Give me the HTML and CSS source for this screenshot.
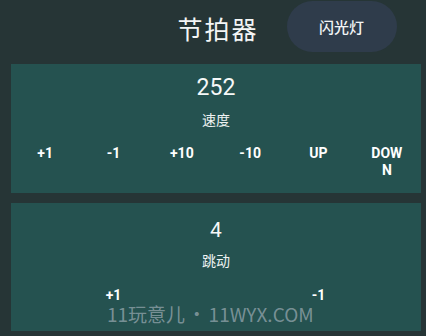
FILE: index.html
```html
<!DOCTYPE html>
<html lang="zh">
<head>
<meta charset="utf-8">
<link rel="stylesheet" href="styles.css">
</head>
<body>
<div class="screen">
  <header class="topbar">
    <div class="spacer"></div>
    <h1 class="title">节拍器</h1>
    <div class="actions"><button class="pill">闪光灯</button></div>
  </header>
  <section class="card card-speed">
    <div class="value value-speed">252</div>
    <div class="label">速度</div>
    <div class="btns six">
      <button class="btn"><span>+1</span></button>
      <button class="btn"><span>-1</span></button>
      <button class="btn"><span>+10</span></button>
      <button class="btn"><span>-10</span></button>
      <button class="btn"><span>UP</span></button>
      <button class="btn"><span>DOWN</span></button>
    </div>
  </section>
  <section class="card card-beat">
    <div class="value value-beat">4</div>
    <div class="label label-beat">跳动</div>
    <div class="btns two">
      <button class="btn"><span>+1</span></button>
      <button class="btn"><span>-1</span></button>
    </div>
  </section>
  <div class="watermark">11玩意儿 • 11WYX.COM</div>
</div>
</body>
</html>
```
FILE: styles.css
```css
* { box-sizing: border-box; }
html, body {
  margin: 0;
  padding: 0;
  background: #263536;
}
body {
  font-family: Roboto, "Noto Sans CJK SC", sans-serif;
  color: #ffffff;
  width: 426px;
  height: 336px;
  overflow: hidden;
}
.screen {
  position: relative;
  width: 426px;
  height: 336px;
  padding: 1px 5px 0 11px;
}
.topbar {
  display: grid;
  grid-template-columns: 1fr auto 1fr;
  align-items: center;
  height: 51px;
  margin-bottom: 12px;
  padding-left: 4px;
}
.title {
  margin: 0;
  font-family: "Noto Sans CJK SC", sans-serif;
  font-weight: 400;
  font-size: 25px;
  line-height: 30px;
  letter-spacing: 2px;
  color: #f4f6f6;
  margin-top: 2px;
}
.actions {
  display: flex;
  justify-content: flex-start;
  padding-left: 28px;
}
.pill {
  width: 110px;
  height: 51px;
  border: none;
  border-radius: 26px;
  background: #2f3c4b;
  color: #f2f4f6;
  font-family: "Noto Sans CJK SC", sans-serif;
  font-weight: 500;
  font-size: 15px;
  padding: 0;
}
.card {
  background: #255250;
  display: flex;
  flex-direction: column;
  align-items: center;
}
.card-speed {
  height: 129px;
  padding-top: 10px;
  margin-bottom: 10px;
}
.card-beat {
  height: 128px;
  padding-top: 15px;
}
.value {
  font-weight: 400;
  color: #f6f8f8;
}
.value-speed {
  font-size: 23px;
  line-height: 27px;
}
.value-beat {
  font-size: 21px;
  line-height: 25px;
}
.label {
  font-family: "Noto Sans CJK SC", sans-serif;
  font-size: 14px;
  line-height: 20px;
  margin-top: 8px;
  color: #eef2f2;
}
.label-beat {
  margin-top: 7px;
}
.btns {
  display: grid;
  width: 100%;
  margin-top: 16px;
}
.btns.six { grid-template-columns: repeat(6, 1fr); }
.btns.two { grid-template-columns: repeat(2, 1fr); margin-top: 17px; }
.btn {
  background: none;
  border: none;
  padding: 0;
  color: #ffffff;
  font-family: Roboto, sans-serif;
  font-weight: 700;
  font-size: 14px;
  line-height: 17px;
  display: flex;
  justify-content: center;
  align-items: flex-start;
}
.btn span {
  display: block;
  max-width: 38px;
  word-break: break-all;
  text-align: center;
}
.watermark {
  position: absolute;
  left: 107px;
  top: 304px;
  font-family: "Noto Sans CJK SC", sans-serif;
  font-size: 19px;
  line-height: 20px;
  color: rgba(175, 185, 195, 0.62);
  white-space: nowrap;
  word-spacing: -2px;
}
```
